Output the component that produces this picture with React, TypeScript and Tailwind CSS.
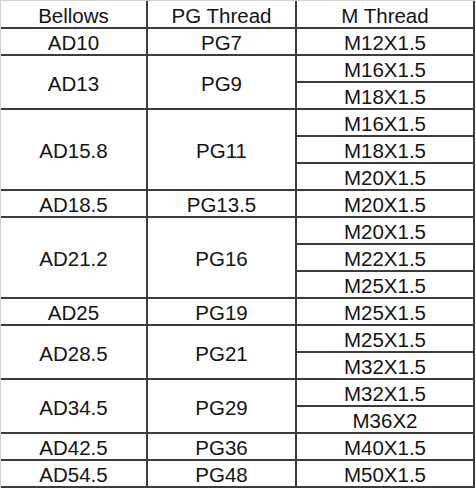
const groups: { bellows: string; pg: string; m: string[] }[] = [
  { bellows: "AD10", pg: "PG7", m: ["M12X1.5"] },
  { bellows: "AD13", pg: "PG9", m: ["M16X1.5", "M18X1.5"] },
  { bellows: "AD15.8", pg: "PG11", m: ["M16X1.5", "M18X1.5", "M20X1.5"] },
  { bellows: "AD18.5", pg: "PG13.5", m: ["M20X1.5"] },
  { bellows: "AD21.2", pg: "PG16", m: ["M20X1.5", "M22X1.5", "M25X1.5"] },
  { bellows: "AD25", pg: "PG19", m: ["M25X1.5"] },
  { bellows: "AD28.5", pg: "PG21", m: ["M25X1.5", "M32X1.5"] },
  { bellows: "AD34.5", pg: "PG29", m: ["M32X1.5", "M36X2"] },
  { bellows: "AD42.5", pg: "PG36", m: ["M40X1.5"] },
  { bellows: "AD54.5", pg: "PG48", m: ["M50X1.5"] },
];

const cell =
  "flex items-center justify-center pt-[4px] border-r-2 border-b-2 border-[#3c3c3c] text-[20.5px] leading-none text-[#141414]";

export default function App() {
  let row = 2;

  return (
    <div className="w-[476px] h-[488px] bg-white" style={{ fontFamily: '"Liberation Sans", Arial, sans-serif' }}>
      <div className="grid grid-cols-[147px_149px_178px] grid-rows-[28px_repeat(17,27px)] w-[475px] border-t border-l border-[#d2d2d2]">
        <div className={cell}>Bellows</div>
        <div className={cell}>PG Thread</div>
        <div className={cell}>M Thread</div>

        {groups.map((g) => {
          const start = row;
          const span = g.m.length;
          row += span;
          return [
            <div
              key={g.bellows + "-b"}
              className={cell}
              style={{ gridColumn: 1, gridRow: `${start} / span ${span}` }}
            >
              {g.bellows}
            </div>,
            <div
              key={g.bellows + "-p"}
              className={cell}
              style={{ gridColumn: 2, gridRow: `${start} / span ${span}` }}
            >
              {g.pg}
            </div>,
            ...g.m.map((m, i) => (
              <div
                key={g.bellows + "-m" + i}
                className={cell}
                style={{ gridColumn: 3, gridRow: start + i }}
              >
                {m}
              </div>
            )),
          ];
        })}
      </div>
    </div>
  );
}
